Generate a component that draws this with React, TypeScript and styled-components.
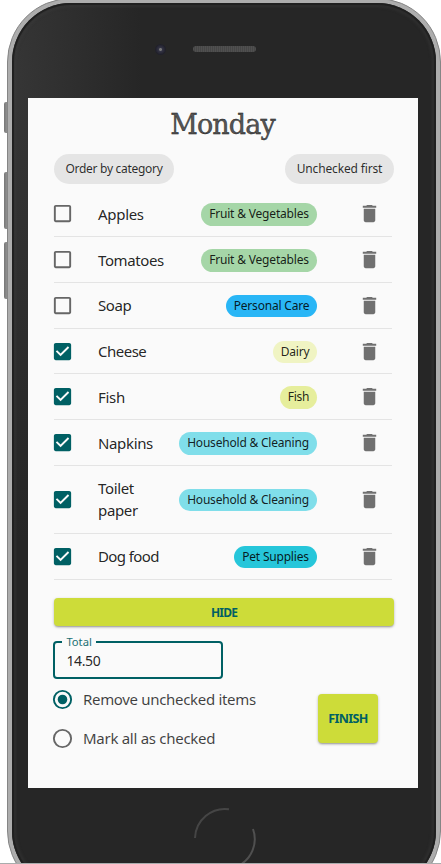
import React, { useState } from "react";
import styled, { createGlobalStyle } from "styled-components";

const teal = "#006064";
const lime = "#cddc39";

const GlobalStyle = createGlobalStyle`
  *, *::before, *::after { box-sizing: border-box; }
  html, body { margin: 0; background: #fff; overflow: hidden; }
  body { font-family: "Noto Sans", "Open Sans", sans-serif; color: rgba(0, 0, 0, 0.87); }
  button { font-family: inherit; border: 0; margin: 0; padding: 0; cursor: pointer; }
`;

const Stage = styled.main`
  position: relative;
  width: 441px;
  height: 864px;
  overflow: hidden;
  border-bottom: 1px solid #a9adad;
`;

const SideKey = styled.span<{ $top: number; $height: number }>`
  position: absolute;
  left: 4px;
  top: ${(p) => p.$top}px;
  width: 4px;
  height: ${(p) => p.$height}px;
  border-radius: 2px 0 0 2px;
  background: linear-gradient(90deg, #777, #999);
`;

const Phone = styled.div`
  position: relative;
  width: 434px;
  height: 897px;
  margin: -2px 0 0 7px;
  border-radius: 64px;
  background: #adadad;
  border: 1px solid #858585;
  padding: 4px;
`;

const Bezel = styled.div`
  height: 100%;
  border-radius: 59px;
  padding: 95px 0 0 16px;
  background: radial-gradient(ellipse 130px 460px at 0 80px, #363636, #262626);
  box-shadow: inset 0 0 1px 2px #202020, inset 0 0 3px 4px rgba(65, 65, 65, 0.4);
`;

const Camera = styled.span`
  position: absolute;
  left: 147px;
  top: 45px;
  width: 11px;
  height: 11px;
  border-radius: 50%;
  background: radial-gradient(circle, #777 0 1px, #333344 2px, #20202a 5px);
`;

const Speaker = styled.span`
  position: absolute;
  left: 185px;
  top: 47px;
  width: 63px;
  height: 6px;
  border-radius: 3px;
  background: repeating-linear-gradient(90deg, #505050 0 1px, #464646 1px 2px);
`;

const HomeButton = styled.svg`
  position: absolute;
  left: 185px;
  top: 808px;
  width: 64px;
  height: 64px;
`;

const Screen = styled.section`
  width: 390px;
  height: 690px;
  padding: 7px 24px 0 26px;
  background: #fafafa;
`;

const Title = styled.h1`
  margin: 0;
  height: 40px;
  padding-right: 3px;
  text-align: center;
  font: 400 27px/40px "DejaVu Serif", serif;
  letter-spacing: -0.9px;
  color: #555;
  -webkit-text-stroke: 0.35px #111;
`;

const Filters = styled.div`
  display: flex;
  justify-content: space-between;
  margin: 9px 0 7.4px;
`;

const FilterChip = styled.button<{ $width: number; $spacing: number }>`
  width: ${(p) => p.$width}px;
  height: 30px;
  border-radius: 15px;
  background: #e5e5e5;
  color: rgba(0, 0, 0, 0.82);
  font-size: 12px;
  line-height: 30px;
  letter-spacing: ${(p) => p.$spacing}px;
  white-space: nowrap;
`;

const List = styled.ul`
  list-style: none;
  margin: 0;
  padding: 0;
  width: 338px;
`;

const Row = styled.li<{ $tall?: boolean }>`
  display: grid;
  grid-template-columns: 44px 1fr auto 75px;
  align-items: center;
  height: ${(p) => (p.$tall ? 68 : 45.75)}px;
  border-bottom: 1px solid #e4e4e4;
`;

const IconButton = styled.button`
  display: flex;
  background: none;
  svg { display: block; }
`;

const CheckButton = styled(IconButton)`
  margin-left: -3px;
  width: 24px;
`;

const TrashButton = styled(IconButton)`
  justify-self: end;
  margin-right: 11px;
`;

const Name = styled.span<{ $spacing: number }>`
  padding-right: 12px;
  font-size: 15px;
  line-height: 22px;
  letter-spacing: ${(p) => p.$spacing}px;
`;

const Tag = styled.span<{ $color: string; $width: number; $spacing: number }>`
  width: ${(p) => p.$width}px;
  height: 22.5px;
  margin-top: 1.5px;
  border-radius: 12px;
  background: ${(p) => p.$color};
  font-size: 12px;
  line-height: 22px;
  letter-spacing: ${(p) => p.$spacing}px;
  text-align: center;
  white-space: nowrap;
`;

const ActionButton = styled.button<{ $large?: boolean }>`
  width: ${(p) => (p.$large ? "60px" : "340px")};
  height: ${(p) => (p.$large ? 49 : 28)}px;
  border-radius: 4px;
  background: ${lime};
  color: ${teal};
  font-weight: 700;
  font-size: ${(p) => (p.$large ? 12.5 : 12)}px;
  letter-spacing: ${(p) => (p.$large ? -0.6 : -0.8)}px;
  box-shadow: 0 2px 2px -1px rgba(0, 0, 0, 0.22), 0 1px 3px rgba(0, 0, 0, 0.25);
`;

const Panel = styled.div`
  padding-top: 18.6px;
`;

const TotalField = styled.fieldset`
  width: 170px;
  height: 44px;
  margin: 9px 0 0 -0.6px;
  padding: 0 11px;
  border: 2px solid ${teal};
  border-radius: 4px;
  min-width: 0;
`;

const TotalLegend = styled.legend`
  height: 14px;
  margin-left: -4px;
  padding: 0 4px;
  color: #1b7074;
  font-size: 11.2px;
  line-height: 14px;
  letter-spacing: 0;
`;

const TotalInput = styled.input`
  display: block;
  width: 100%;
  height: 24px;
  padding: 0;
  border: 0;
  outline: 0;
  background: none;
  color: rgba(0, 0, 0, 0.87);
  font: 14px/24px "Noto Sans", sans-serif;
  letter-spacing: -0.35px;
`;

const Footer = styled.div`
  display: flex;
  justify-content: space-between;
  padding: 0.5px 16px 0 0;
`;

const Options = styled.div`
  display: flex;
  flex-direction: column;
`;

const Option = styled.button<{ $spacing: number }>`
  display: flex;
  align-items: center;
  gap: 9px;
  height: 39px;
  margin-left: -3px;
  background: none;
  color: rgba(0, 0, 0, 0.75);
  font-size: 15px;
  letter-spacing: ${(p) => p.$spacing}px;
  white-space: nowrap;
`;

const FinishSlot = styled.div`
  padding-top: 14px;
`;

const CheckIcon = ({ checked }: { checked: boolean }) => (
  <svg width="23" height="23" viewBox="0 0 24 24" fill={checked ? teal : "#666"}>
    {checked ? (
      <path d="M19 3H5c-1.11 0-2 .9-2 2v14c0 1.1.89 2 2 2h14c1.11 0 2-.9 2-2V5c0-1.1-.89-2-2-2zm-9 14l-5-5 1.41-1.41L10 14.17l7.59-7.59L19 8l-9 9z" />
    ) : (
      <path d="M19 5v14H5V5h14m0-2H5c-1.1 0-2 .9-2 2v14c0 1.1.9 2 2 2h14c1.1 0 2-.9 2-2V5c0-1.1-.9-2-2-2z" />
    )}
  </svg>
);

const TrashIcon = () => (
  <svg width="23" height="23" viewBox="0 0 24 24" fill="#707070">
    <path d="M6 19c0 1.1.9 2 2 2h8c1.1 0 2-.9 2-2V7H6v12zM19 4h-3.500l-1-1h-5l-1 1H5v2h14V4z" />
  </svg>
);

const RadioIcon = ({ checked }: { checked: boolean }) => (
  <svg width="23" height="23" viewBox="0 0 24 24" fill="none">
    <circle cx="12" cy="12" r="9" stroke={checked ? teal : "#666"} strokeWidth="2" />
    {checked && <circle cx="12" cy="12" r="5" fill={teal} />}
  </svg>
);

const items = [
  { name: "Apples", spacing: -0.3, tag: "Fruit & Vegetables", color: "#a5d6a7", width: 116, tagSpacing: -0.18, done: false },
  { name: "Tomatoes", spacing: -0.4, tag: "Fruit & Vegetables", color: "#a5d6a7", width: 116, tagSpacing: -0.18, done: false },
  { name: "Soap", spacing: -0.4, tag: "Personal Care", color: "#29b6f6", width: 91, tagSpacing: -0.2, done: false },
  { name: "Cheese", spacing: -0.5, tag: "Dairy", color: "#f0f4c3", width: 44, tagSpacing: -0.2, done: true },
  { name: "Fish", spacing: -0.3, tag: "Fish", color: "#e6ee9c", width: 37, tagSpacing: -0.2, done: true },
  { name: "Napkins", spacing: -0.35, tag: "Household & Cleaning", color: "#80deea", width: 138, tagSpacing: -0.2, done: true },
  { name: "Toilet paper", spacing: -0.35, tag: "Household & Cleaning", color: "#80deea", width: 138, tagSpacing: -0.2, done: true, tall: true },
  { name: "Dog food", spacing: -0.6, tag: "Pet Supplies", color: "#26c6da", width: 83, tagSpacing: -0.2, done: true },
];

export default function App() {
  const [done, setDone] = useState(items.map((i) => i.done));
  const [mode, setMode] = useState(0);
  const [total, setTotal] = useState("14.50");
  return (
    <>
      <GlobalStyle />
      <Stage>
        <SideKey $top={102} $height={31} />
        <SideKey $top={172} $height={57} />
        <SideKey $top={242} $height={57} />
        <Phone>
          <Bezel>
            <Screen>
              <Title>Monday</Title>
              <Filters>
                <FilterChip $width={120} $spacing={-0.3}>Order by category</FilterChip>
                <FilterChip $width={109} $spacing={-0.15}>Unchecked first</FilterChip>
              </Filters>
              <List>
                {items.map((item, i) => (
                  <Row key={item.name} $tall={item.tall}>
                    <CheckButton
                      aria-label={item.name}
                      onClick={() => setDone(done.map((d, j) => (j === i ? !d : d)))}
                    >
                      <CheckIcon checked={done[i]} />
                    </CheckButton>
                    <Name $spacing={item.spacing}>{item.name}</Name>
                    <Tag $color={item.color} $width={item.width} $spacing={item.tagSpacing}>
                      {item.tag}
                    </Tag>
                    <TrashButton aria-label="Delete">
                      <TrashIcon />
                    </TrashButton>
                  </Row>
                ))}
              </List>
              <Panel>
                <ActionButton>HIDE</ActionButton>
                <TotalField>
                  <TotalLegend>Total</TotalLegend>
                  <TotalInput value={total} onChange={(e) => setTotal(e.target.value)} />
                </TotalField>
                <Footer>
                  <Options>
                    <Option $spacing={-0.32} onClick={() => setMode(0)}>
                      <RadioIcon checked={mode === 0} />
                      Remove unchecked items
                    </Option>
                    <Option $spacing={-0.28} onClick={() => setMode(1)}>
                      <RadioIcon checked={mode === 1} />
                      Mark all as checked
                    </Option>
                  </Options>
                  <FinishSlot>
                    <ActionButton $large>FINISH</ActionButton>
                  </FinishSlot>
                </Footer>
              </Panel>
            </Screen>
          </Bezel>
          <Camera />
          <Speaker />
          <HomeButton viewBox="0 0 64 64" fill="none" stroke="#505050" strokeWidth="2">
            <path d="M2 31A30 30 0 0 1 36 2.300" strokeOpacity=".75" />
            <path d="M60 22A30 30 0 0 1 45 59" />
          </HomeButton>
        </Phone>
      </Stage>
    </>
  );
}
